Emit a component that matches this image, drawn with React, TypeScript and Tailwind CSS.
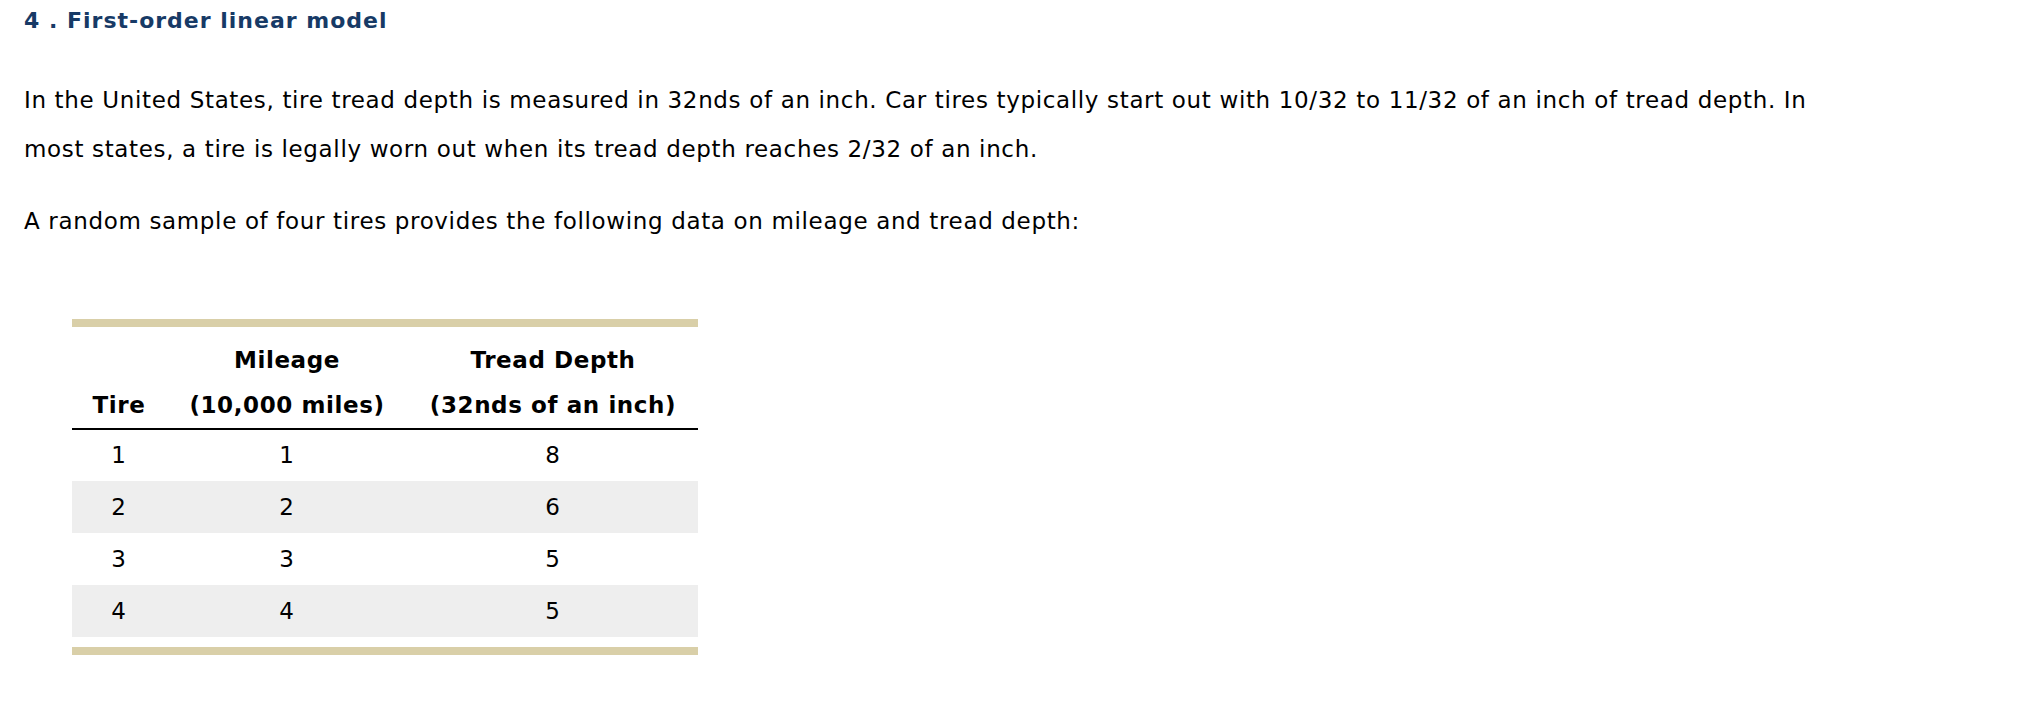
import React from 'react'

const rows = [
  { tire: 1, mileage: 1, depth: 8 },
  { tire: 2, mileage: 2, depth: 6 },
  { tire: 3, mileage: 3, depth: 5 },
  { tire: 4, mileage: 4, depth: 5 },
]

export default function App() {
  return (
    <div className="min-h-[702px] bg-white pl-6 pr-4 text-[23px] tracking-[0.65px] text-black font-['DejaVu_Sans',Verdana,sans-serif]">
      <h1 className="text-[22px] font-bold leading-[41px] tracking-[1px] text-[#173a66]">4 . First-order linear model</h1>

      <p className="mt-[35px] max-w-[1840px] leading-[49px]">
        In the United States, tire tread depth is measured in 32nds of an inch. Car tires typically start out with 10/32 to 11/32 of an inch of tread depth. In most states, a tire is legally worn out when its tread depth reaches 2/32 of an inch.
      </p>

      <p className="mt-[23px] leading-[49px]">
        A random sample of four tires provides the following data on mileage and tread depth:
      </p>

      <div className="ml-[48px] mt-[73px] w-[626px] border-t-8 border-b-8 border-[#d9cfa8] pt-[11px] pb-[10px]">
        <table className="w-full border-collapse">
          <thead className="tracking-[0.6px]">
            <tr className="leading-[45px]">
              <th className="w-[94px]" />
              <th className="w-[242px] font-bold">Mileage</th>
              <th className="font-bold">Tread Depth</th>
            </tr>
            <tr className="border-b-2 border-black leading-[45px]">
              <th className="font-bold">Tire</th>
              <th className="font-bold">(10,000 miles)</th>
              <th className="font-bold">(32nds of an inch)</th>
            </tr>
          </thead>
          <tbody>
            {rows.map((r, i) => (
              <tr key={r.tire} className={`h-[52px] text-center ${i % 2 === 1 ? 'bg-[#eeeeee]' : ''}`}>
                <td>{r.tire}</td>
                <td>{r.mileage}</td>
                <td>{r.depth}</td>
              </tr>
            ))}
          </tbody>
        </table>
      </div>
    </div>
  )
}
